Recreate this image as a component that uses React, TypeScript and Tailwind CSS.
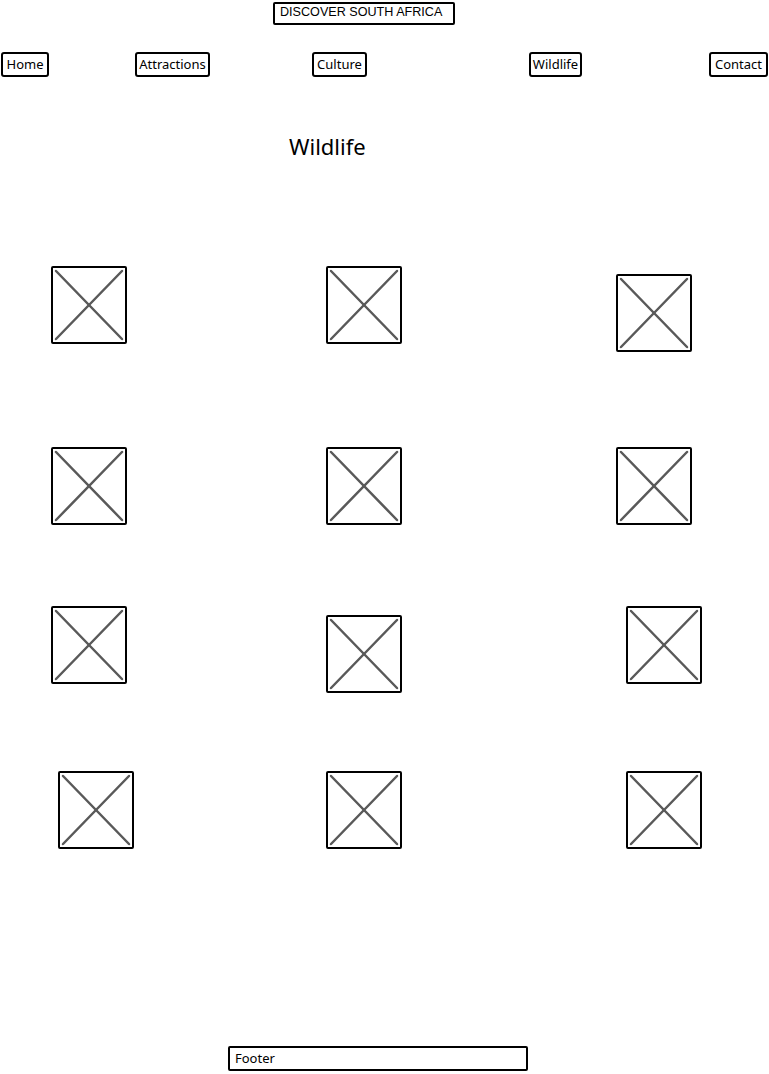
import React from "react";

const Ph = ({ className = "" }: { className?: string }) => (
  <div className={`relative w-[76px] h-[78px] shrink-0 border-2 border-black rounded-[2px] bg-white ${className}`}>
    <svg className="absolute inset-0 w-full h-full" viewBox="0 0 72 74" preserveAspectRatio="none">
      <line x1="3" y1="3" x2="69" y2="71" stroke="#595959" strokeWidth="2.5" strokeLinecap="round" />
      <line x1="69" y1="3" x2="3" y2="71" stroke="#595959" strokeWidth="2.5" strokeLinecap="round" />
    </svg>
  </div>
);

const Btn = ({ label, className = "" }: { label: string; className?: string }) => (
  <div
    className={`h-[25px] shrink-0 border-2 border-black rounded-[3px] flex items-center justify-center text-[13px] text-black bg-white ${className}`}
  >
    {label}
  </div>
);

export default function App() {
  return (
    <div
      className="w-[769px] h-[1074px] bg-white overflow-hidden flex flex-col"
      style={{ fontFamily: '"Noto Sans", "Liberation Sans", sans-serif' }}
    >
      <div className="mt-[2px] ml-[273px] w-[182px] h-[23px] border-2 border-black rounded-[2px] flex items-center pl-[5px] pb-[2px] text-[12.6px] text-black font-['Liberation_Sans',sans-serif]">
        DISCOVER SOUTH AFRICA
      </div>

      <nav className="mt-[27px] flex items-start">
        <Btn label="Home" className="ml-[1px] w-[48px]" />
        <Btn label="Attractions" className="ml-[86px] w-[75px]" />
        <Btn label="Culture" className="ml-[102px] w-[55px]" />
        <Btn label="Wildlife" className="ml-[162px] w-[53px]" />
        <Btn label="Contact" className="ml-[127px] w-[59px]" />
      </nav>

      <h1 className="mt-[54px] ml-[289px] h-[30px] leading-[30px] text-[22px] text-black font-normal">Wildlife</h1>

      <div className="mt-[105px] flex items-start">
        <Ph className="ml-[51px]" />
        <Ph className="ml-[199px]" />
        <Ph className="ml-[214px] mt-[8px]" />
      </div>

      <div className="mt-[95px] flex items-start">
        <Ph className="ml-[51px]" />
        <Ph className="ml-[199px]" />
        <Ph className="ml-[214px]" />
      </div>

      <div className="mt-[81px] flex items-start">
        <Ph className="ml-[51px]" />
        <Ph className="ml-[199px] mt-[9px]" />
        <Ph className="ml-[224px]" />
      </div>

      <div className="mt-[78px] flex items-start">
        <Ph className="ml-[58px]" />
        <Ph className="ml-[192px]" />
        <Ph className="ml-[224px]" />
      </div>

      <footer className="mt-[197px] ml-[228px] w-[300px] h-[25px] border-2 border-black rounded-[2px] flex items-center pl-[5px] text-[13px] text-black">
        Footer
      </footer>
    </div>
  );
}
